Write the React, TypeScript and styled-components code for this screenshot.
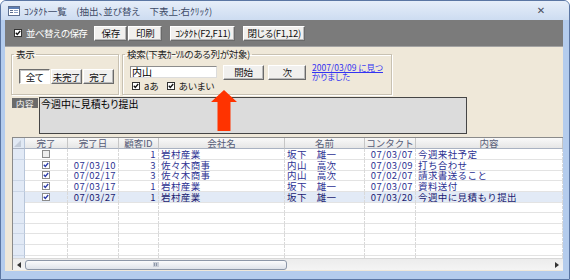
import React from 'react';
import styled, { createGlobalStyle } from 'styled-components';

const GlobalStyle = createGlobalStyle`
  html, body { margin: 0; padding: 0; background: #ffffff; }
  body { font-family: "Noto Sans CJK JP", "Noto Sans", sans-serif; }
  * { box-sizing: border-box; }
`;

const COLS = '12px 43px 51px 40px 126px 80px 51px 147px';

const Window = styled.div`
	width: 570px;
	height: 280px;
	display: flex;
	flex-direction: column;
	background: #b4cced;
	border: 1px solid #5b76a3;
	border-radius: 6px 6px 0 0;
	overflow: hidden;
`;

const TitleBar = styled.div`
	flex-shrink: 0;
	height: 19px;
	display: flex;
	align-items: center;
	padding: 0 0 0 7px;
	background: linear-gradient(#e6eef9, #cddcf1);
	color: #3d4a66;
	font-size: 9.5px;
	font-feature-settings: 'palt';
`;

const TitleText = styled.span`
	margin-left: 4px;
	flex: 1;
	line-height: 12px;
	white-space: pre;
`;

const CloseX = styled.span`
	width: 22px;
	margin-right: 17px;
	text-align: center;
	font-family: 'DejaVu Sans', sans-serif;
	font-size: 10px;
	color: #4a4f5c;
`;

const Frame = styled.div`
	flex: 1;
	min-height: 0;
	display: flex;
	flex-direction: column;
	margin: 0 6px 8px 4px;
	background: #efe8d9;
	font-feature-settings: 'palt';
`;

const Toolbar = styled.div`
	flex-shrink: 0;
	height: 27px;
	display: flex;
	align-items: center;
	padding-left: 9px;
	background: #7b7b7b;
	border-bottom: 1px solid #a3a3a3;
`;

const ToolLabel = styled.span`
	margin-left: 4px;
	margin-right: 7px;
	color: #ffffff;
	font-size: 9.5px;
	letter-spacing: -0.6px;
	line-height: 12px;
`;

const Btn = styled.button<{ $w: number; $gap?: number; $pressed?: boolean }>`
	flex-shrink: 0;
	width: ${(p) => p.$w}px;
	height: 15px;
	margin: 0 0 0 ${(p) => p.$gap ?? 0}px;
	padding: 0;
	font-family: inherit;
	font-feature-settings: 'palt';
	font-size: 9.5px;
	letter-spacing: -0.3px;
	line-height: 12px;
	color: #111;
	background: ${(p) => (p.$pressed ? '#ffffff' : '#f1f0ee')};
	border: 1px solid;
	border-color: ${(p) =>
		p.$pressed ? '#6d6d6d #ffffff #ffffff #6d6d6d' : '#ffffff #6a6a6a #6a6a6a #ffffff'};
	box-shadow: ${(p) => (p.$pressed ? 'inset 1px 1px 0 #c5c5c5' : 'inset -1px -1px 0 #b9b9b9')};
	white-space: nowrap;
	overflow: visible;
`;

const Content = styled.div`
	position: relative;
	flex: 1;
	min-height: 0;
	display: flex;
	flex-direction: column;
	padding: 2px 0 0 6px;
`;

const TopRow = styled.div`
	flex-shrink: 0;
	display: flex;
	gap: 3px;
`;

const Group = styled.fieldset<{ $w: number }>`
	width: ${(p) => p.$w}px;
	height: 46px;
	margin: 0;
	padding: 0;
	border: 1px solid #c8c1b2;
	box-shadow: 1px 1px 0 #ffffff, inset 1px 1px 0 #ffffff;
`;

const Legend = styled.legend`
	margin-left: 2px;
	padding: 0 2px;
	height: 11px;
	font-size: 9.5px;
	letter-spacing: -0.3px;
	line-height: 11px;
	color: #222;
`;

const ViewButtons = styled.div`
	display: flex;
	gap: 1px;
	padding: 9px 0 0 7px;
`;

const SearchBody = styled.div`
	display: flex;
	flex-direction: column;
	padding: 3px 0 0 7px;
`;

const SearchRow = styled.div`
	display: flex;
	align-items: center;
	height: 18px;
`;

const SearchInput = styled.div`
	width: 87px;
	height: 12px;
	margin-right: 6px;
	padding-left: 1px;
	background: #ffffff;
	border: 1px solid #a7a7a7;
	border-color: #8c8c8c #dcdcdc #dcdcdc #8c8c8c;
	font-size: 10px;
	line-height: 10px;
	color: #000;
`;

const Link = styled.div`
	margin-left: 6px;
	color: #3333f2;
	font-size: 8.5px;
	line-height: 9px;
	white-space: nowrap;
`;

const Underlined = styled.span`
	text-decoration: underline;
`;

const CheckRow = styled.div`
	display: flex;
	align-items: center;
	height: 8px;
	margin-top: 1px;
	padding-left: 2px;
	font-size: 9.5px;
	line-height: 9px;
	color: #222;
`;

const CheckText = styled.span<{ $gap?: number }>`
	margin: 0 ${(p) => p.$gap ?? 0}px 0 4px;
`;

const MemoRow = styled.div`
	flex-shrink: 0;
	display: flex;
	align-items: flex-start;
	margin-top: 2px;
	padding-left: 1px;
`;

const MemoLabel = styled.div`
	width: 26px;
	height: 10px;
	margin-top: 1px;
	background: #6b6b6b;
	color: #ffffff;
	font-size: 8.5px;
	line-height: 10px;
	text-align: center;
	letter-spacing: 0.5px;
`;

const MemoBox = styled.div`
	width: 428px;
	height: 37px;
	margin-left: 1px;
	padding: 1px 0 0 1px;
	background: #dcdcdc;
	border: 1px solid #454545;
	font-size: 10px;
	line-height: 10px;
	color: #000;
`;

const Arrow = styled.svg`
	position: absolute;
	left: 206px;
	top: 43px;
`;

const Sheet = styled.div`
	flex: 1;
	min-height: 0;
	display: flex;
	flex-direction: column;
	margin: 3px 0 1px 1px;
	border-top: 1px solid #8a8a8a;
	border-left: 1px solid #8a8a8a;
	background: #ffffff;
	font-feature-settings: normal;
`;

const HeadRow = styled.div`
	flex-shrink: 0;
	display: grid;
	grid-template-columns: ${COLS};
	height: 11px;
`;

const HeadCell = styled.div`
	display: flex;
	align-items: center;
	justify-content: center;
	background: linear-gradient(#f9f9f9, #e6e6e6);
	border-right: 1px solid #c6c6c6;
	border-bottom: 1px solid #a9b2c2;
	color: #555b76;
	font-size: 9.5px;
	line-height: 10px;
	white-space: nowrap;
`;

const Corner = styled.div`
	display: flex;
	align-items: flex-end;
	justify-content: flex-start;
	padding: 0 0 1px 1px;
	background: #e1e9f4;
	border-right: 1px solid #b8c6da;
	border-bottom: 1px solid #a9b2c2;
`;

const Rows = styled.div`
	flex: 1;
	min-height: 0;
	overflow: hidden;
`;

const Row = styled.div<{ $current?: boolean }>`
	display: grid;
	grid-template-columns: ${COLS};
	height: 10.67px;
	background: ${(p) => (p.$current ? '#e2eaf6' : '#ffffff')};
	color: ${(p) => (p.$current ? '#1a1a70' : '#2c3192')};
`;

const Selector = styled.div`
	background: #e2eaf6;
	border-right: 1px solid #b8c6da;
	border-bottom: 1px solid #cbd6e6;
`;

const Cell = styled.div<{ $align?: 'left' | 'right' | 'center' }>`
	display: flex;
	align-items: center;
	justify-content: ${(p) =>
		p.$align === 'right' ? 'flex-end' : p.$align === 'center' ? 'center' : 'flex-start'};
	padding: 0 2px;
	border-right: 1px dashed #d9d9d9;
	border-bottom: 1px solid #e3e3e3;
	font-size: 9.5px;
	line-height: 10px;
	letter-spacing: 0.4px;
	white-space: nowrap;
`;

const ScrollBar = styled.div`
	flex-shrink: 0;
	height: 12px;
	display: flex;
	align-items: center;
	background: linear-gradient(#ececec, #f4f4f4);
	border-top: 1px solid #d8d8d8;
`;

const ScrollEnd = styled.div`
	width: 12px;
	height: 100%;
	display: flex;
	align-items: center;
	justify-content: center;
`;

const Thumb = styled.div`
	width: 262px;
	height: 10px;
	display: flex;
	align-items: center;
	justify-content: center;
	background: linear-gradient(#fbfbfc, #dfe3ea);
	border: 1px solid #8d97a8;
	border-radius: 3px;
`;

const Track = styled.div`
	flex: 1;
`;

function Check({ checked, tone = 'dark' }: { checked: boolean; tone?: 'dark' | 'blue' }) {
	const stroke = tone === 'blue' ? '#2a3aa8' : '#111111';
	return (
		<svg width="8" height="8" viewBox="0 0 8 8">
			<rect
				x="0.5"
				y="0.5"
				width="7"
				height="7"
				fill={tone === 'blue' ? (checked ? '#ffffff' : '#eeeeee') : '#ffffff'}
				stroke={tone === 'blue' ? '#8c8c8c' : '#333333'}
			/>
			{checked && <polyline points="1.8,3.8 3.3,5.5 6.2,2" fill="none" stroke={stroke} strokeWidth="1.3" />}
		</svg>
	);
}

function FormIcon() {
	return (
		<svg width="12" height="10" viewBox="0 0 12 10">
			<rect x="0.5" y="0.5" width="11" height="9" fill="#ffffff" stroke="#5d6f8f" />
			<rect x="1" y="1" width="10" height="2" fill="#5d7fb5" />
			<rect x="2" y="4" width="3" height="1" fill="#5d6f8f" />
			<rect x="6" y="4" width="4" height="1" fill="#8aa0c4" />
			<rect x="2" y="6" width="3" height="1" fill="#5d6f8f" />
			<rect x="6" y="6" width="4" height="1" fill="#8aa0c4" />
		</svg>
	);
}

interface Contact {
	done: boolean;
	doneDate: string;
	customerId: number;
	company: string;
	name: string;
	contact: string;
	memo: string;
}

const contacts: Contact[] = [
	{ done: false, doneDate: '', customerId: 1, company: '岩村産業', name: '坂下　雄一', contact: '07/03/07', memo: '今週来社予定' },
	{ done: true, doneDate: '07/03/10', customerId: 3, company: '佐々木商事', name: '内山　高次', contact: '07/03/09', memo: '打ち合わせ' },
	{ done: true, doneDate: '07/02/17', customerId: 3, company: '佐々木商事', name: '内山　高次', contact: '07/02/07', memo: '請求書送ること' },
	{ done: true, doneDate: '07/03/17', customerId: 1, company: '岩村産業', name: '坂下　雄一', contact: '07/03/07', memo: '資料送付' },
	{ done: true, doneDate: '07/03/27', customerId: 1, company: '岩村産業', name: '坂下　雄一', contact: '07/03/20', memo: '今週中に見積もり提出' },
];

const headers = ['完了', '完了日', '顧客ID', '会社名', '名前', 'コンタクト', '内容'];

export default function App() {
	return (
		<>
			<GlobalStyle />
			<Window>
				<TitleBar>
					<FormIcon />
					<TitleText>ｺﾝﾀｸﾄ一覧　(抽出、並び替え　下表上:右ｸﾘｯｸ)</TitleText>
					<CloseX>✕</CloseX>
				</TitleBar>
				<Frame>
					<Toolbar>
						<Check checked />
						<ToolLabel>並べ替えの保存</ToolLabel>
						<Btn $w={33}>保存</Btn>
						<Btn $w={34} $gap={1}>印刷</Btn>
						<Btn $w={65} $gap={8}>ｺﾝﾀｸﾄ(F2,F11)</Btn>
						<Btn $w={62} $gap={8}>閉じる(F1,12)</Btn>
					</Toolbar>
					<Content>
						<TopRow>
							<Group $w={108}>
								<Legend>表示</Legend>
								<ViewButtons>
									<Btn $w={31} $pressed>全て</Btn>
									<Btn $w={31}>未完了</Btn>
									<Btn $w={31}>完了</Btn>
								</ViewButtons>
							</Group>
							<Group $w={270}>
								<Legend>検索(下表ｶｰｿﾙのある列が対象)</Legend>
								<SearchBody>
									<SearchRow>
										<SearchInput>内山</SearchInput>
										<Btn $w={41}>開始</Btn>
										<Btn $w={38} $gap={4}>次</Btn>
										<Link>
											<Underlined>2007/03/09 に見つ</Underlined>
											<br />
											かりました
										</Link>
									</SearchRow>
									<CheckRow>
										<Check checked />
										<CheckText $gap={8}>aあ</CheckText>
										<Check checked />
										<CheckText>あいまい</CheckText>
									</CheckRow>
								</SearchBody>
							</Group>
						</TopRow>
						<MemoRow>
							<MemoLabel>内容</MemoLabel>
							<MemoBox>今週中に見積もり提出</MemoBox>
						</MemoRow>
						<Sheet>
							<HeadRow>
								<Corner>
									<svg width="7" height="7" viewBox="0 0 7 7">
										<polygon points="7,0 7,7 0,7" fill="#c3ccd9" />
									</svg>
								</Corner>
								{headers.map((h) => (
									<HeadCell key={h}>{h}</HeadCell>
								))}
							</HeadRow>
							<Rows>
								{contacts.map((c, i) => (
									<Row key={i} $current={i === contacts.length - 1}>
										<Selector />
										<Cell $align="center">
											<Check checked={c.done} tone="blue" />
										</Cell>
										<Cell $align="right">{c.doneDate}</Cell>
										<Cell $align="right">{c.customerId}</Cell>
										<Cell>{c.company}</Cell>
										<Cell>{c.name}</Cell>
										<Cell $align="right">{c.contact}</Cell>
										<Cell>{c.memo}</Cell>
									</Row>
								))}
								{Array.from({ length: 6 }).map((_, i) => (
									<Row key={`e${i}`}>
										<Selector />
										<Cell />
										<Cell />
										<Cell />
										<Cell />
										<Cell />
										<Cell />
										<Cell />
									</Row>
								))}
							</Rows>
							<ScrollBar>
								<ScrollEnd>
									<svg width="4" height="6" viewBox="0 0 4 6">
										<polygon points="4,0 4,6 0,3" fill="#333" />
									</svg>
								</ScrollEnd>
								<Thumb>
									<svg width="6" height="5" viewBox="0 0 6 5">
										<rect x="0" y="0" width="6" height="5" fill="#c9ced8" />
										<rect x="1" y="1" width="1" height="3" fill="#8d97a8" />
										<rect x="3" y="1" width="1" height="3" fill="#8d97a8" />
									</svg>
								</Thumb>
								<Track />
								<ScrollEnd>
									<svg width="4" height="6" viewBox="0 0 4 6">
										<polygon points="0,0 0,6 4,3" fill="#333" />
									</svg>
								</ScrollEnd>
							</ScrollBar>
						</Sheet>
						<Arrow width="26" height="41" viewBox="0 0 26 41">
							<polygon points="13,0 26,12 19.5,12 19.5,41 6.5,41 6.5,12 0,12" fill="#ff3300" />
						</Arrow>
					</Content>
				</Frame>
			</Window>
		</>
	);
}
